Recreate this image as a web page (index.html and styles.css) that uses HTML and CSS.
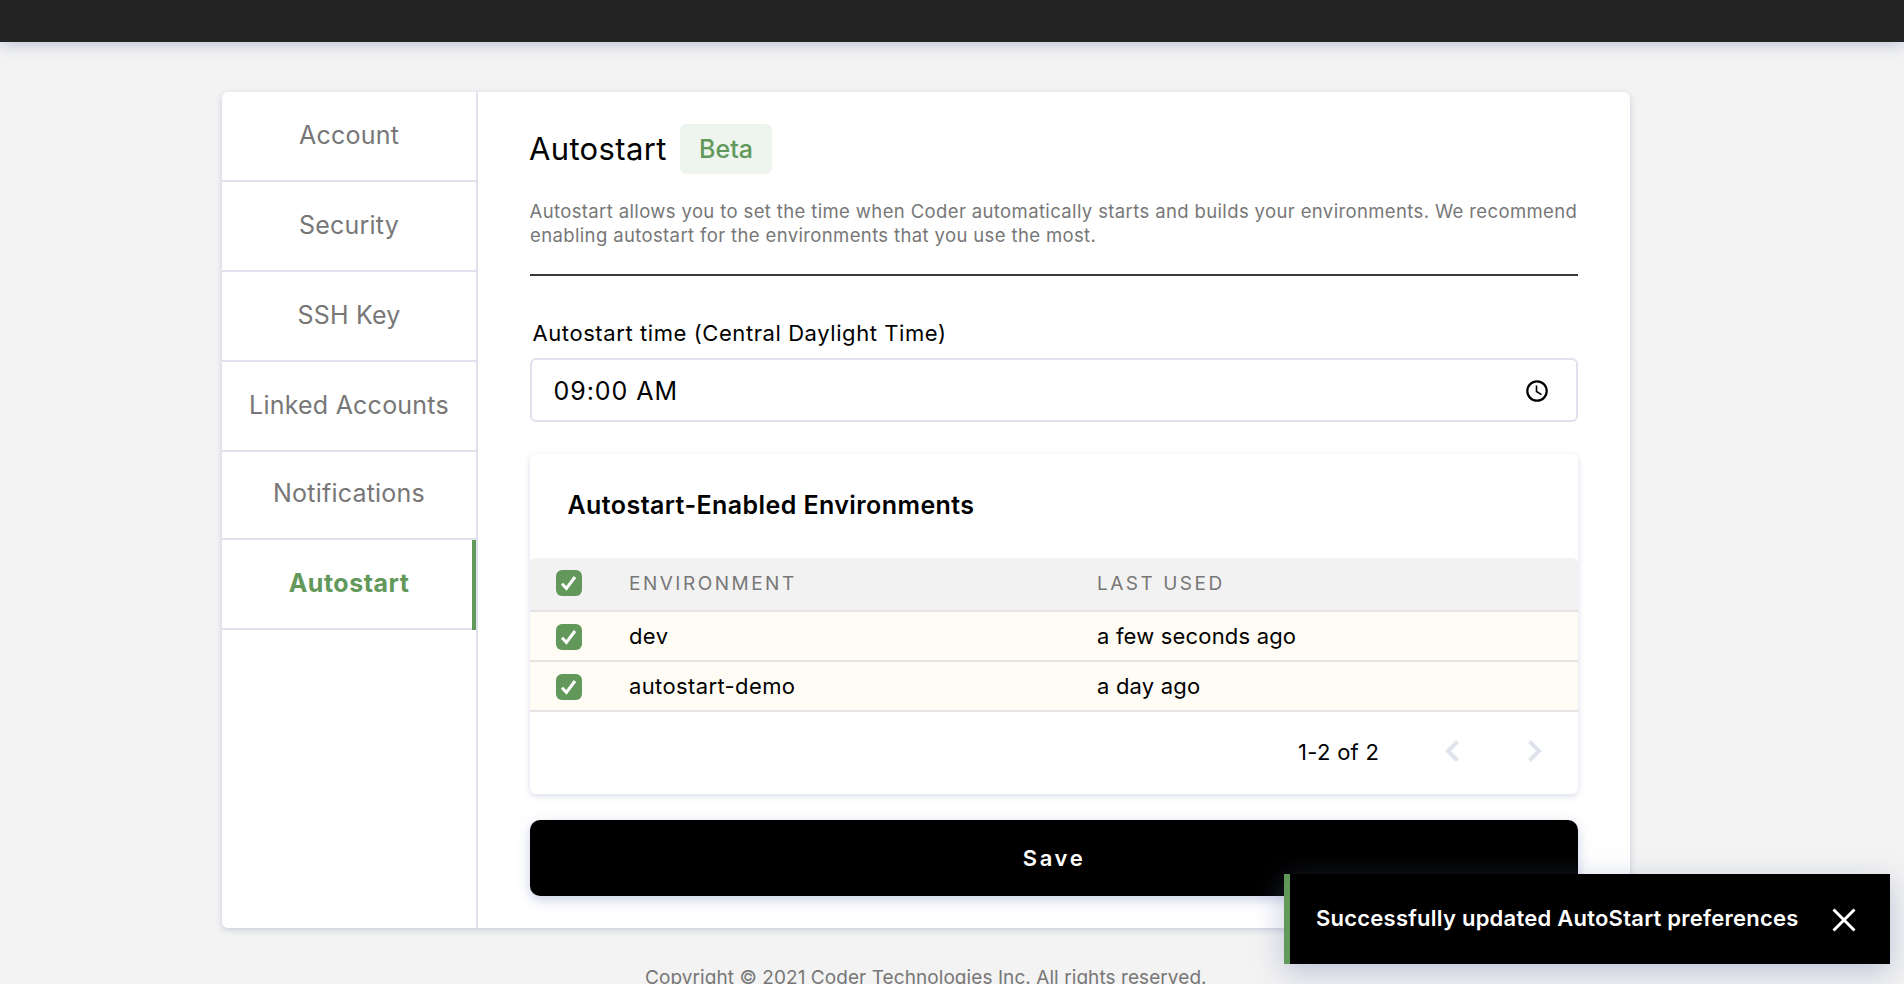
FILE: index.html
```html
<!DOCTYPE html>
<html lang="en">
<head>
<meta charset="utf-8">
<title>Autostart</title>
<link rel="stylesheet" href="styles.css">
</head>
<body>
<header class="topbar"></header>
<main class="card">
  <nav class="tabs">
    <a class="tab">Account</a>
    <a class="tab">Security</a>
    <a class="tab">SSH Key</a>
    <a class="tab">Linked Accounts</a>
    <a class="tab tab-short">Notifications</a>
    <a class="tab active">Autostart</a>
  </nav>
  <section class="content">
    <div class="heading"><h1>Autostart</h1><span class="badge">Beta</span></div>
    <p class="intro">Autostart allows you to set the time when Coder automatically starts and builds your environments. We recommend<br>enabling autostart for the environments that you use the most.</p>
    <label class="label">Autostart time (Central Daylight Time)</label>
    <div class="time"><span class="value">09:00 AM</span>
      <svg class="clock" width="24" height="24" viewBox="0 0 24 24" fill="none" stroke="#000" stroke-width="2.200"><circle cx="12" cy="12" r="9.700"/><path stroke-width="1.600" d="M11.500 6.500v6l5 3.200"/></svg>
    </div>
    <div class="panel">
      <h2>Autostart-Enabled Environments</h2>
      <div class="table">
        <div class="row head">
          <svg class="check" width="26" height="26" viewBox="0 0 26 26"><rect width="26" height="26" rx="6"/><path d="M6 13.800l4.400 4.700L19 7"/></svg>
          <span class="c1">ENVIRONMENT</span><span class="c2">LAST USED</span>
        </div>
        <div class="row">
          <svg class="check" width="26" height="26" viewBox="0 0 26 26"><rect width="26" height="26" rx="6"/><path d="M6 13.800l4.400 4.700L19 7"/></svg>
          <span class="c1">dev</span><span class="c2">a few seconds ago</span>
        </div>
        <div class="row">
          <svg class="check" width="26" height="26" viewBox="0 0 26 26"><rect width="26" height="26" rx="6"/><path d="M6 13.800l4.400 4.700L19 7"/></svg>
          <span class="c1">autostart-demo</span><span class="c2">a day ago</span>
        </div>
      </div>
      <div class="pager">
        <span class="range">1-2 of 2</span>
        <svg class="chev" width="14" height="22" viewBox="0 0 14 22"><path d="M12.500 1.500L3 11l9.500 9.500"/></svg>
        <svg class="chev" width="14" height="22" viewBox="0 0 14 22"><path d="M1.500 1.500L11 11l-9.500 9.500"/></svg>
      </div>
    </div>
    <button class="save">Save</button>
  </section>
</main>
<footer class="footer">Copyright © 2021 Coder Technologies Inc. All rights reserved.</footer>
<div class="toast"><span class="msg">Successfully updated AutoStart preferences</span>
  <svg class="close" width="24" height="24" viewBox="0 0 24 24" fill="none" stroke="#fff" stroke-width="3"><path d="M1.500 1.500l21 21M22.500 1.500l-21 21"/></svg>
</div>
</body>
</html>
```
FILE: styles.css
```css
* { box-sizing: border-box; }
html { overflow: hidden; }
body { margin: 0; height: 984px; overflow: hidden; background: #f3f3f3; font-family: Inter, sans-serif; color: #000; }
.topbar { height: 42px; background: #242424; box-shadow: 0 2px 16px rgba(150, 160, 195, .6); }
.card { display: flex; width: 1408px; height: 836px; margin: 50px 0 0 222px; background: #fff; border-radius: 6px; box-shadow: 0 2px 6px rgba(150, 160, 190, .45); }
.tabs { width: 256px; border-right: 2px solid #dfe1ec; }
.tab { display: flex; align-items: center; justify-content: center; height: 90px; padding-bottom: 3px; border-bottom: 2px solid #dfe1ec; font-size: 25px; letter-spacing: .22px; color: #777; white-space: nowrap; }
.tab-short { height: 88px; padding-bottom: 4px; }
.tab.active { position: relative; color: #62995b; font-weight: 700; letter-spacing: .5px; }
.tab.active::after { content: ""; position: absolute; right: 0; top: 0; width: 4px; height: 90px; background: #62995b; }
.content { width: 1152px; padding: 32px 52px 0; }
.heading { display: flex; align-items: center; height: 50px; }
h1 { margin: 0 0 2px -1px; width: 151px; font-size: 31px; font-weight: 400; letter-spacing: .35px; white-space: nowrap; }
.badge { display: flex; align-items: center; justify-content: center; width: 92px; height: 50px; border-radius: 6px; background: #edf5ee; color: #62995b; font-size: 25px; font-weight: 500; }
.intro { margin: 0; height: 102px; padding-top: 25px; border-bottom: 2px solid #39373b; color: #777; font-size: 18.5px; letter-spacing: .37px; line-height: 24px; text-indent: -.5px; white-space: nowrap; }
.label { display: block; height: 82px; padding: 43px 0 0 2.5px; font-size: 22px; line-height: 28px; letter-spacing: .58px; }
.time { display: flex; align-items: center; justify-content: space-between; height: 64px; padding: 0 27px 0 21.5px; border: 2px solid #dfe1ec; border-radius: 6px; font-size: 25px; letter-spacing: .95px; }
.value { margin-top: 2px; }
.clock { margin-top: 2px; }
.panel { height: 340px; margin-top: 32px; border-radius: 6px; box-shadow: 0 2px 6px rgba(170, 178, 210, .45); }
h2 { display: flex; align-items: center; height: 104px; margin: 0; padding: 0 0 2px 37.5px; font-size: 25px; font-weight: 600; letter-spacing: .42px; }
.row { display: flex; align-items: center; height: 50px; padding-left: 26px; border-bottom: 2px solid #e4e4e4; background: #fffcf5; font-size: 22px; }
.row.head { height: 54px; border-radius: 6px 6px 0 0; background: #f2f2f2; color: #777; font-size: 19px; }
.check { flex: none; margin-top: 2px; fill: #62995b; }
.head .check { margin: 0 0 2px; }
.check path { fill: none; stroke: #fff; stroke-width: 3; }
.c1 { width: 468px; margin-left: 47px; letter-spacing: .38px; }
.c2 { letter-spacing: .18px; }
.head .c1, .head .c2 { margin-bottom: 2px; letter-spacing: 2.5px; }
.pager { display: flex; align-items: center; height: 82px; padding: 0 0 4px 768px; }
.range { flex: none; width: 147px; margin-top: 2px; font-size: 22px; letter-spacing: .3px; }
.chev { flex: none; margin-right: 69px; fill: none; stroke: #dfe3ec; stroke-width: 4; }
.chev:last-child { margin-right: 0; }
.save { display: block; width: 100%; height: 76px; margin-top: 26px; padding: 0; border: 0; border-radius: 10px; background: #000; color: #fff; font: 600 22px Inter, sans-serif; letter-spacing: 2.6px; box-shadow: 0 4px 12px rgba(150, 165, 205, .5); }
.footer { margin: 38px 0 0 645px; font-size: 19px; letter-spacing: .07px; line-height: 24px; color: #777; white-space: nowrap; }
.toast { position: absolute; left: 1284px; top: 874px; display: flex; align-items: center; width: 606px; height: 90px; padding-left: 26px; border-left: 6px solid #62995b; background: #000; color: #fff; font-size: 22px; font-weight: 600; letter-spacing: .24px; white-space: nowrap; box-shadow: 0 8px 28px rgba(100, 115, 165, .38); }
.msg { width: 516px; margin-bottom: 2px; }
.close { margin-top: 2px; }
```
